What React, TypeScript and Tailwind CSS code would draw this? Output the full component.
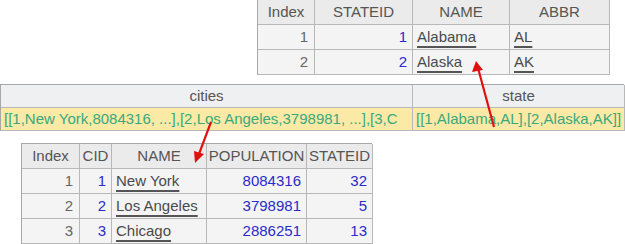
import React from "react";

const font = { fontFamily: '"Liberation Sans", Arial, sans-serif' };

type Cell = { t: string; k: "h" | "i" | "n" | "s" };

function Cell({ c }: { c: Cell }) {
  if (c.k === "h")
    return (
      <div className="flex items-center justify-center border-r border-b border-[#b8b8b8] bg-[#ebebeb] text-[#555] whitespace-nowrap overflow-hidden">
        {c.t}
      </div>
    );
  if (c.k === "i")
    return (
      <div className="flex items-center justify-end pr-[6px] border-r border-b border-[#b8b8b8] bg-[#f4f4f4] text-[#666]">
        {c.t}
      </div>
    );
  if (c.k === "n")
    return (
      <div className="flex items-center justify-end pr-[5px] border-r border-b border-[#b8b8b8] bg-[#f4f4f4] text-[#2b2bc8]">
        {c.t}
      </div>
    );
  return (
    <div className="flex items-center justify-start pl-[4px] border-r border-b border-[#b8b8b8] bg-[#f4f4f4] text-[#4a4a4a] whitespace-nowrap">
      <span className="underline decoration-[2px] underline-offset-[4px] decoration-[#555]">{c.t}</span>
    </div>
  );
}

export default function App() {
  const top: Cell[] = [
    { t: "Index", k: "h" }, { t: "STATEID", k: "h" }, { t: "NAME", k: "h" }, { t: "ABBR", k: "h" },
    { t: "1", k: "i" }, { t: "1", k: "n" }, { t: "Alabama", k: "s" }, { t: "AL", k: "s" },
    { t: "2", k: "i" }, { t: "2", k: "n" }, { t: "Alaska", k: "s" }, { t: "AK", k: "s" },
  ];
  const bottom: Cell[] = [
    { t: "Index", k: "h" }, { t: "CID", k: "h" }, { t: "NAME", k: "h" }, { t: "POPULATION", k: "h" }, { t: "STATEID", k: "h" },
    { t: "1", k: "i" }, { t: "1", k: "n" }, { t: "New York", k: "s" }, { t: "8084316", k: "n" }, { t: "32", k: "n" },
    { t: "2", k: "i" }, { t: "2", k: "n" }, { t: "Los Angeles", k: "s" }, { t: "3798981", k: "n" }, { t: "5", k: "n" },
    { t: "3", k: "i" }, { t: "3", k: "n" }, { t: "Chicago", k: "s" }, { t: "2886251", k: "n" }, { t: "13", k: "n" },
  ];
  return (
    <div className="relative w-[625px] h-[244px] bg-white overflow-hidden text-[15px]" style={font}>
      <div className="flex flex-col">
        <div className="ml-[257px] w-[352px] grid grid-cols-[57px_98px_97px_100px] grid-rows-[25px_25px_25px] border-l border-[#a8a8a8]">
          {top.map((c, i) => (
            <Cell key={i} c={c} />
          ))}
        </div>
        <div className="mt-[9px] w-[624px] grid grid-cols-[412px_212px] grid-rows-[23px_23px] border-l border-t border-[#a8a8a8]">
          <div className="flex items-center justify-center border-r border-b border-[#b8b8b8] bg-[#eff0f1] text-[#555]">cities</div>
          <div className="flex items-center justify-center border-r border-b border-[#b8b8b8] bg-[#eff0f1] text-[#555]">state</div>
          <div className="flex items-center pl-[3px] border-r border-b border-[#b8b8b8] bg-[#fbe9a6] text-[#3aa87c] whitespace-nowrap overflow-hidden">
            [[1,New York,8084316, ...],[2,Los Angeles,3798981, ...],[3,C
          </div>
          <div className="flex items-center pl-[3px] border-r border-b border-[#b8b8b8] bg-[#fbe9a6] text-[#3aa87c] whitespace-nowrap overflow-hidden">
            [[1,Alabama,AL],[2,Alaska,AK]]
          </div>
        </div>
        <div className="mt-[12px] ml-[21px] w-[351px] grid grid-cols-[58px_32px_95px_100px_66px] grid-rows-[25px_25px_25px_25px] border-l border-t border-[#a8a8a8]">
          {bottom.map((c, i) => (
            <Cell key={i} c={c} />
          ))}
        </div>
      </div>
      <svg className="absolute left-0 top-0 pointer-events-none" width="625" height="244">
        <line x1="494" y1="127" x2="478" y2="68" stroke="#e01010" strokeWidth="2.2" />
        <polygon points="476,61 472,72 483,70" fill="#e01010" />
        <line x1="211" y1="122" x2="199" y2="154" stroke="#e01010" strokeWidth="2.2" />
        <polygon points="195,163 194,151 204,154" fill="#e01010" />
      </svg>
    </div>
  );
}
